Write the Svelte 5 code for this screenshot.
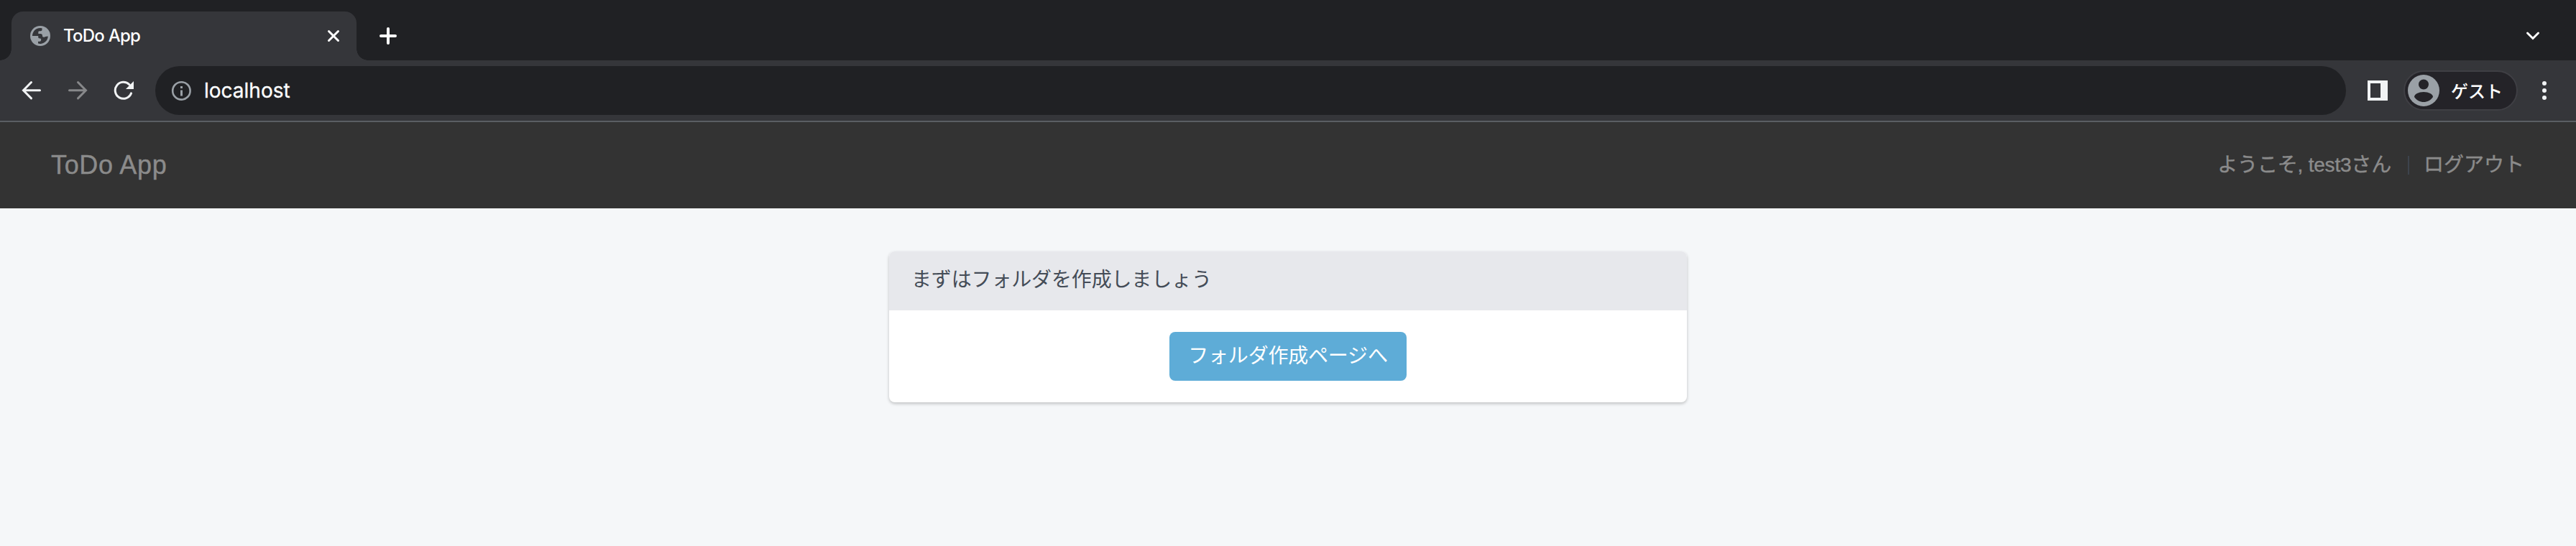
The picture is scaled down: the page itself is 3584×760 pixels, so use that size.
<svelte:options runes={true} />

<script>
  const menuDots = [0, 1, 2];
</script>

<div class="window">
  <div class="tabstrip">
    <div class="tab">
      <svg class="globe" width="28" height="28" viewBox="0 0 28 28">
        <circle cx="14" cy="14" r="14" fill="#9aa0a6" />
        <path d="M16.500 3.200V5.500c0 1.200-.8 1.700-2 1.700H12.800c-1.200 0-1.500.9-1.500 2.300v1.600h3c1.700 0 2.700.9 2.700 2.900 0 1 .6 1.700 2 1.700 1.700 0 2.700-1.200 5.800-1.200A11 11 0 0 1 11 24.600V21.700h2.300c1.300 0 1.900-.9 1.900-2.600 0-1.100-.5-1.700-2-1.700-1.400 0-2-.8-2-2V14H3A11 11 0 0 1 16.500 3.200z" fill="#35363a" />
      </svg>
      <span class="tab-title">ToDo App</span>
      <svg class="close" width="20" height="20" viewBox="0 0 20 20">
        <path d="M3.500 3.500l13 13M16.500 3.500l-13 13" stroke="#fff" stroke-width="3" stroke-linecap="round" />
      </svg>
    </div>
    <svg class="plus" width="24" height="24" viewBox="0 0 24 24">
      <path d="M12 2v20M2 12h20" stroke="#fff" stroke-width="4" stroke-linecap="round" />
    </svg>
    <svg class="chevron" width="20" height="14" viewBox="0 0 20 14">
      <path d="M2.500 3l7.500 7.500L17.500 3" fill="none" stroke="#fff" stroke-width="3" stroke-linecap="round" />
    </svg>
  </div>

  <div class="toolbar">
    <svg class="back" width="28" height="28" viewBox="0 0 28 28">
      <path d="M13.500 2.500L2.500 13.700 13.500 24.900M3 13.700h22.500" fill="none" stroke="#f1f3f4" stroke-width="3" stroke-linecap="round" />
    </svg>
    <svg class="forward" width="28" height="28" viewBox="0 0 28 28">
      <path d="M14.500 2.500L25.500 13.700 14.500 24.900M25 13.700H2.500" fill="none" stroke="#87888a" stroke-width="3" stroke-linecap="round" />
    </svg>
    <svg class="reload" width="28" height="28" viewBox="0 0 28 28">
      <path d="M24.500 17.900A11.500 11.500 0 1 1 22 5.800" fill="none" stroke="#f1f3f4" stroke-width="3" stroke-linecap="round" />
      <path d="M28 1v11H17z" fill="#f1f3f4" />
    </svg>
    <div class="omnibox">
      <svg width="28" height="28" viewBox="0 0 28 28">
        <circle cx="14.400" cy="14.400" r="12.200" fill="none" stroke="#9aa0a6" stroke-width="2.600" />
        <path d="M14.500 8v3M14.500 13.500v8" stroke="#9aa0a6" stroke-width="3" />
      </svg>
      <span class="url">localhost</span>
    </div>
    <svg class="panel-icon" width="28" height="28" viewBox="0 0 28 28">
      <path d="M0 0h28v28H0zM4 4v20h14V4z" fill="#f1f3f4" fill-rule="evenodd" />
    </svg>
    <div class="profile">
      <svg width="44" height="44" viewBox="0 0 44 44">
        <circle cx="22" cy="22" r="22" fill="#9aa0a6" />
        <circle cx="22" cy="13.500" r="7" fill="#242328" />
        <path d="M9 31c0-4 6-7 13-7s13 3 13 7c-3 4.500-8 7-13 7s-10-2.500-13-7z" fill="#242328" />
      </svg>
      <span class="guest">ゲスト</span>
    </div>
    <div class="menu">
      {#each menuDots as dot (dot)}<i></i>{/each}
    </div>
  </div>

  <header>
    <a class="brand" href="#top">ToDo App</a>
    <nav>
      <span class="welcome">ようこそ, test3さん</span>
      <span class="divider"></span>
      <a class="logout" href="#logout">ログアウト</a>
    </nav>
  </header>

  <main>
    <section class="card">
      <div class="card-head"><span>まずはフォルダを作成しましょう</span></div>
      <div class="card-body">
        <a class="button" href="#create"><span>フォルダ作成ページへ</span></a>
      </div>
    </section>
  </main>
</div>

<style>
  :global(body) { margin: 0; background: #f5f7f9; }
  .window {
    width: 3584px; height: 760px; overflow: hidden; background: #f5f7f9;
    display: flex; flex-direction: column; box-sizing: border-box;
    font-family: "Liberation Sans", "Noto Sans CJK JP", sans-serif;
  }
  svg { display: block; flex: none; }
  span, a { white-space: nowrap; line-height: 1; text-decoration: none; }
  .tabstrip { height: 84px; flex: none; background: #202124; display: flex; align-items: center; box-sizing: border-box; padding: 16px 50px 0 16px; }
  .tab {
    width: 480px; height: 68px; box-sizing: border-box; background: #35363a; border-radius: 16px 16px 0 0;
    display: flex; align-items: center; padding: 0 22px 0 26px; position: relative;
  }
  .tab::before, .tab::after { content: ""; position: absolute; bottom: 0; width: 16px; height: 16px; }
  .tab::before { left: -16px; background: radial-gradient(circle at 0 0, #202124 15.500px, #35363a 16px); }
  .tab::after { right: -16px; background: radial-gradient(circle at 100% 0, #202124 15.500px, #35363a 16px); }
  .tab-title { font-family: Inter, sans-serif; font-size: 24px; font-weight: 500; letter-spacing: -0.750px; color: #fff; margin-left: 18px; padding-bottom: 1px; flex: 1; }
  .plus { margin-left: 32px; }
  .chevron { margin-left: auto; }
  .toolbar { height: 84px; flex: none; background: #35363a; border-bottom: 2px solid #5b5e63; display: flex; align-items: center; padding: 0 41px 0 30px; }
  .forward { margin-left: 36px; }
  .reload { margin-left: 36px; }
  .omnibox { flex: 1; height: 68px; border-radius: 34px; background: #202124; margin-left: 30px; display: flex; align-items: center; padding-left: 22px; box-sizing: border-box; }
  .url { font-family: Inter, sans-serif; font-size: 28px; color: #fff; margin-left: 18px; -webkit-text-stroke: 0.300px; }
  .panel-icon { margin-left: 30px; }
  .profile { box-sizing: border-box; width: 159px; height: 56px; border: 2px solid #3f3f44; border-radius: 28px; background: #242328; margin-left: 22px; display: flex; align-items: center; padding-left: 4px; }
  .guest { font-family: "Noto Sans CJK JP", sans-serif; font-size: 24px; font-weight: 500; color: #fff; margin-left: 16px; }
  .menu { display: flex; flex-direction: column; gap: 4px; margin-left: 34px; }
  .menu i { width: 6px; height: 6px; border-radius: 50%; background: #f1f3f4; }
  header { height: 120px; flex: none; background: #333; display: flex; align-items: center; justify-content: space-between; padding: 0 72px 0 71px; box-sizing: border-box; color: #8b8b8b; -webkit-text-stroke: 0.400px #8b8b8b; }
  .brand { font-size: 36px; color: #8b8b8b; letter-spacing: 0.650px; }
  nav { display: flex; align-items: center; font-size: 28px; }
  .welcome { letter-spacing: -0.200px; }
  .divider { width: 2px; height: 26px; background: #3d444d; margin: 0 20px 0 23px; }
  .logout { color: #8b8b8b; }
  main { display: flex; justify-content: center; padding-top: 60px; }
  .card { width: 1110px; height: 210px; border-radius: 8px; background: #fff; box-shadow: 0 2px 4px rgba(0,0,0,.22); overflow: hidden; }
  .card-head { height: 82px; box-sizing: border-box; background: #e7e8ec; color: #444c57; font-size: 28px; letter-spacing: -0.150px; display: flex; align-items: center; padding: 0 31px 2px; }
  .card-body { height: 128px; display: flex; justify-content: center; align-items: center; }
  .button { width: 330px; height: 68px; border-radius: 8px; background: #5eacd7; color: #fff; font-size: 28px; letter-spacing: -0.200px; display: flex; justify-content: center; align-items: center; }
</style>
